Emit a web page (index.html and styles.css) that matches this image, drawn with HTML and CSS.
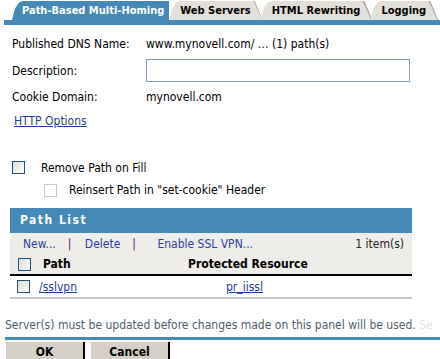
FILE: index.html
```html
<!DOCTYPE html>
<html>

<head>
    <title>Path-Based Multi-Homing</title>
    <link rel="stylesheet" href="styles.css">
</head>

<body>
    <div class="tabs">
        <div class="tab active">Path-Based Multi-Homing</div>
        <div class="tab">Web Servers</div>
        <div class="tab">HTML Rewriting</div>
        <div class="tab">Logging</div>
    </div>
    <div class="tab-bar"></div>

    <div class="form">
        <div class="row">
            <div class="label">Published DNS Name:</div>
            <div class="value">www.mynovell.com/ &hellip; (1) path(s)</div>
        </div>
        <div class="row">
            <div class="label">Description:</div>
            <input type="text" class="text-input">
        </div>
        <div class="row">
            <div class="label">Cookie Domain:</div>
            <div class="value">mynovell.com</div>
        </div>
        <a href="#" class="options-link">HTTP Options</a>
    </div>

    <div class="checks">
        <label class="check"><span class="box"></span>Remove Path on Fill</label>
        <label class="check sub"><span class="box disabled"></span>Reinsert Path in "set-cookie" Header</label>
    </div>

    <div class="path-list">
        <div class="list-title">Path List</div>
        <div class="toolbar">
            <div class="actions">
                <a href="#">New...</a><span class="sep">|</span>
                <a href="#">Delete</a><span class="sep">|</span>
                <a href="#" class="ssl">Enable SSL VPN...</a>
            </div>
            <div class="count">1 item(s)</div>
        </div>
        <div class="list-head">
            <span class="box"></span>
            <div class="col-path">Path</div>
            <div class="col-res">Protected Resource</div>
        </div>
        <div class="list-row">
            <span class="box"></span>
            <div class="col-path"><a href="#">/sslvpn</a></div>
            <div class="col-res"><a href="#">pr_iissl</a></div>
        </div>
    </div>

    <div class="notice">Server(s) must be updated before changes made on this panel will be used. <span class="fade">Se</span></div>

    <div class="buttons">
        <button class="btn">OK</button>
        <button class="btn">Cancel</button>
    </div>
</body>

</html>
```

FILE: styles.css
```css
body {
    margin: 0;
    font-family: "DejaVu Sans Condensed", "DejaVu Sans", sans-serif;
    font-stretch: condensed;
    font-size: 12px;
    color: #000;
    background-color: #ffffff;
    overflow: hidden;
}

a {
    color: #1f3c9c;
}

/* 选项卡 */
.tabs {
    display: flex;
    padding-left: 12px;
    padding-top: 1px;
    height: 19px;
    white-space: nowrap;
}

.tab {
    position: relative;
    flex: none;
    height: 19px;
    line-height: 20px;
    padding: 0 12px 0 11px;
    font-size: 11px;
    font-weight: bold;
    background-color: #e3e0d9;
    clip-path: polygon(0 100%, 3px 40%, 7px 8%, 11px 0, calc(100% - 8px) 0, 100% 100%);
    margin-right: -2px;
}

.tab::after {
    content: '';
    position: absolute;
    right: 3px;
    top: 0;
    width: 2px;
    height: 100%;
    background: #a9a69f;
    transform: skewX(25deg);
}

.tab.active {
    background-color: #4589b9;
    color: #ffffff;
    padding-left: 10px;
    padding-right: 5px;
    z-index: 1;
    margin-right: 0;
    clip-path: polygon(0 100%, 3px 40%, 7px 8%, 11px 0, 100% 0, 100% 100%);
}

.tab.active::after {
    display: none;
}

.tab-bar {
    margin-left: 4px;
    height: 5px;
    background-color: #4589b9;
}

/* 表单 */
.form {
    padding: 5px 12px 0 12px;
}

.row {
    display: flex;
    align-items: center;
    min-height: 27px;
}

.row:nth-child(3) {
    min-height: 26px;
}

.label {
    width: 134px;
}

.text-input {
    width: 264px;
    height: 23px;
    box-sizing: border-box;
    border: 1px solid #7f9db9;
    padding: 0 4px;
    margin: 0;
}

.options-link {
    display: inline-block;
    margin: 4px 0 0 2px;
}

/* 复选框 */
.checks {
    padding: 28px 0 0 12px;
}

.check {
    display: flex;
    align-items: center;
    height: 23px;
}

.check.sub {
    padding-left: 32px;
    height: 22px;
}

.box {
    display: inline-block;
    width: 11px;
    height: 11px;
    border: 1px solid #1c5180;
    background: linear-gradient(135deg, #dcdcd6, #ffffff);
    margin-right: 16px;
    flex: none;
}

.box.disabled {
    border-color: #c9c7ba;
    background: #ffffff;
    margin-right: 12px;
}

/* 路径列表 */
.path-list {
    margin: 7px 28px 0 10px;
}

.list-title {
    background-color: #4589b9;
    color: #ffffff;
    font-weight: bold;
    letter-spacing: 1.5px;
    height: 25px;
    line-height: 25px;
    padding-left: 10px;
    font-size: 12px;
}

.toolbar {
    display: flex;
    justify-content: space-between;
    align-items: center;
    background-color: #efedea;
    height: 21px;
    padding: 0 8px 0 13px;
}

.toolbar a {
    text-decoration: none;
    color: #2c3f9c;
}

.sep {
    color: #5a1a6a;
    margin: 0 10px 0 12px;
}

.ssl {
    margin-left: 8px;
}

.count {
    color: #222;
}

.list-head,
.list-row {
    display: flex;
    align-items: center;
    height: 20px;
    padding-left: 8px;
}

.list-head {
    background-color: #efedea;
    border-bottom: 2px solid #000;
    font-weight: bold;
}

.list-row {
    height: 21px;
    padding-left: 7px;
    border-bottom: 2px solid #c8c8c8;
}

.list-head .box {
    margin-right: 12px;
}

.list-row .box {
    border-color: #2a4f72;
    margin-right: 9px;
}

.col-path {
    width: 145px;
}

.list-row .col-path {
    width: 187px;
}

/* 提示与按钮 */
.notice {
    margin-top: 19px;
    padding-left: 5px;
    color: #4d5d6e;
    white-space: nowrap;
}

.fade {
    color: #e4e6ea;
}

.buttons {
    margin: 5px 0 0 5px;
    border-top: 3px solid #4589b9;
    padding: 2px 0 0 1px;
    display: flex;
    gap: 6px;
}

.btn {
    width: 79px;
    height: 19px;
    border: none;
    border-right: 2px solid #000;
    background-color: #d4d0c8;
    font-family: inherit;
    font-stretch: condensed;
    font-size: 12px;
    font-weight: bold;
    padding: 0;
}
```
